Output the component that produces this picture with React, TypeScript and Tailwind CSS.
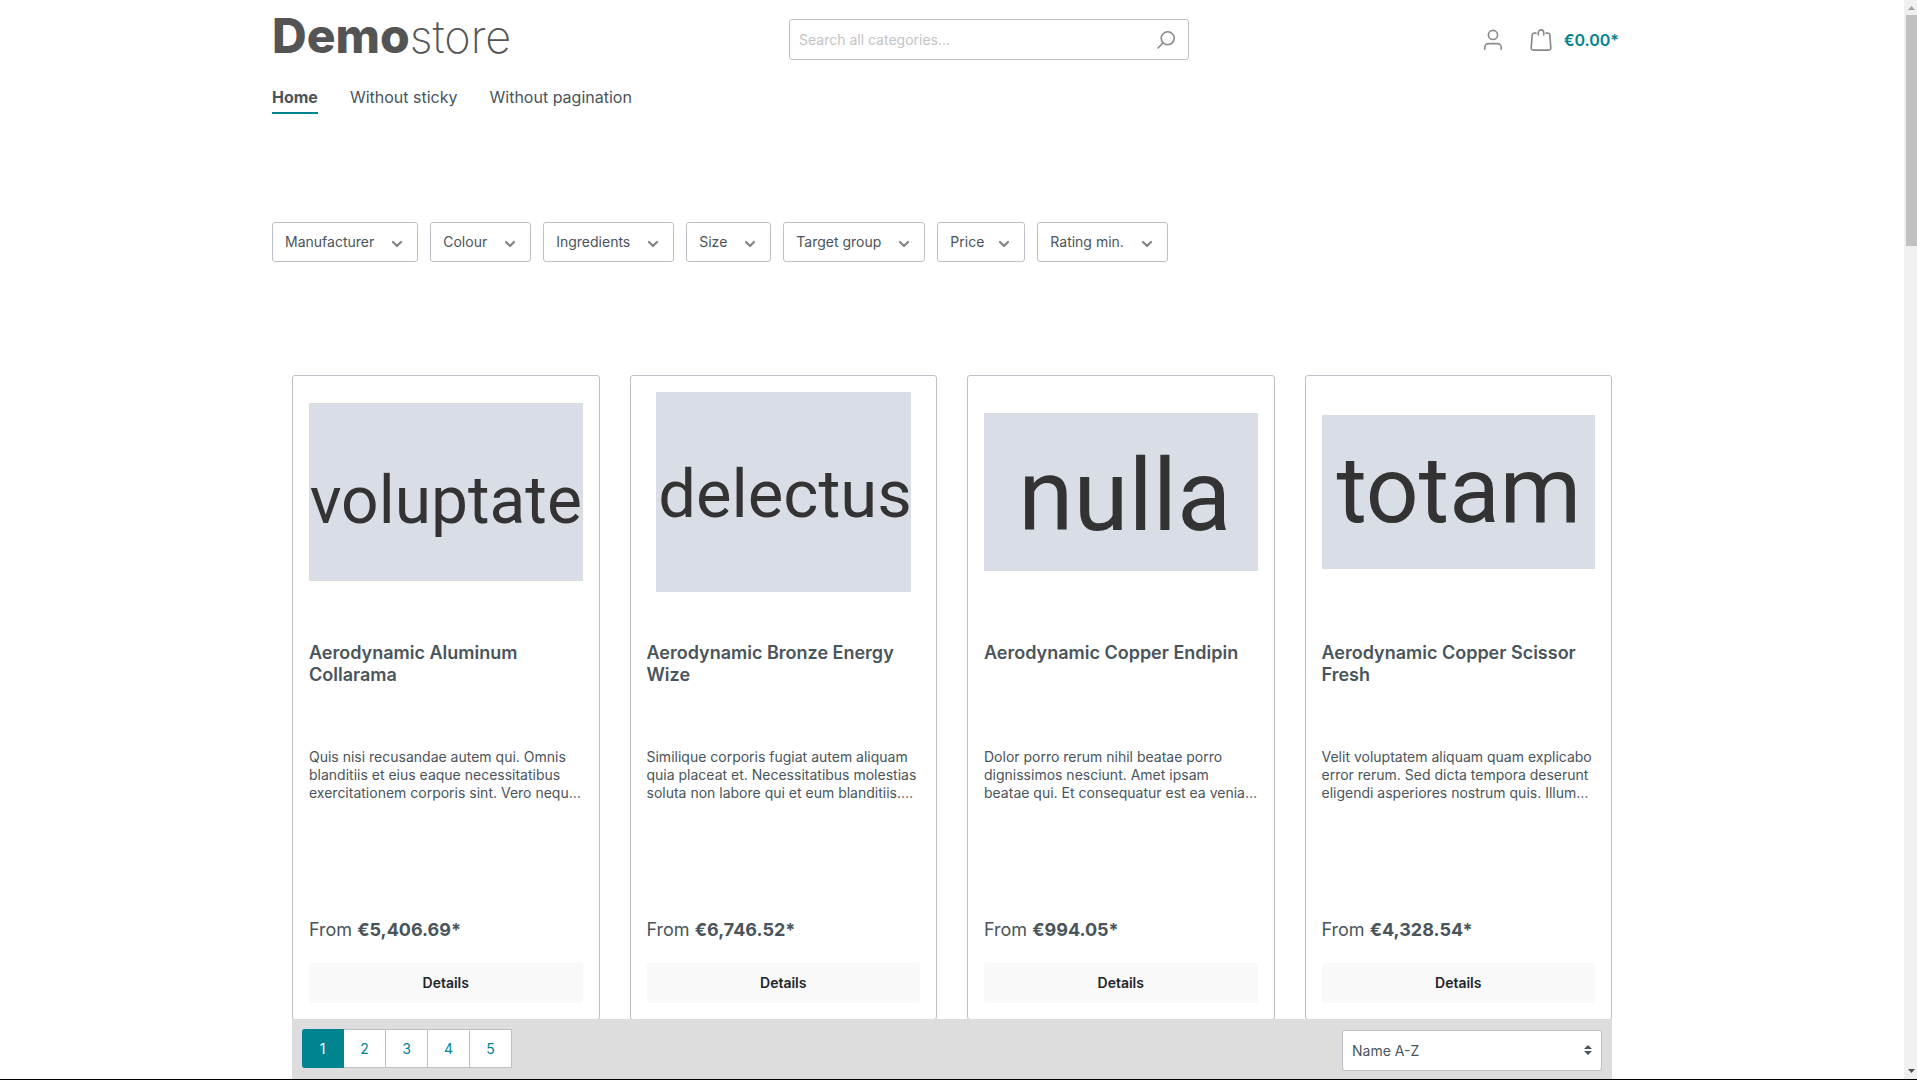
import { clsx } from 'clsx';

type Product = {
  name: string;
  description: string;
  price: string;
  cover: {
    label: string;
    width: number;
    height: number;
    fontSize: number;
    x: number;
    y: number;
  };
};

const navItems = ['Home', 'Without sticky', 'Without pagination'];

const filters = [
  'Manufacturer',
  'Colour',
  'Ingredients',
  'Size',
  'Target group',
  'Price',
  'Rating min.',
];

const pages = [1, 2, 3, 4, 5];

const products: Product[] = [
  {
    name: 'Aerodynamic Aluminum Collarama',
    description:
      'Quis nisi recusandae autem qui. Omnis blanditiis et eius eaque necessitatibus exercitationem corporis sint. Vero nequ…',
    price: '€5,406.69*',
    cover: { label: 'voluptate', width: 274, height: 178, fontSize: 66, x: 137, y: 120 },
  },
  {
    name: 'Aerodynamic Bronze Energy Wize',
    description:
      'Similique corporis fugiat autem aliquam quia placeat et. Necessitatibus molestias soluta non labore qui et eum blanditiis.…',
    price: '€6,746.52*',
    cover: { label: 'delectus', width: 255, height: 200, fontSize: 67, x: 129, y: 125 },
  },
  {
    name: 'Aerodynamic Copper Endipin',
    description:
      'Dolor porro rerum nihil beatae porro dignissimos nesciunt. Amet ipsam beatae qui. Et consequatur est ea venia…',
    price: '€994.05*',
    cover: { label: 'nulla', width: 274, height: 158, fontSize: 100, x: 141, y: 117 },
  },
  {
    name: 'Aerodynamic Copper Scissor Fresh',
    description:
      'Velit voluptatem aliquam quam explicabo error rerum. Sed dicta tempora deserunt eligendi asperiores nostrum quis. Illum…',
    price: '€4,328.54*',
    cover: { label: 'totam', width: 274, height: 154, fontSize: 93, x: 137, y: 107 },
  },
];

const SearchIcon = () => (
  <svg
    width="18"
    height="18"
    viewBox="0 0 18 18"
    fill="none"
    stroke="#8a8a8a"
    strokeWidth="1.6"
    strokeLinecap="round"
  >
    <circle cx="10.7" cy="7.3" r="6.5" />
    <path d="M6 12L1 17" />
  </svg>
);

const AvatarIcon = () => (
  <svg
    width="22"
    height="22"
    viewBox="0 0 24 24"
    fill="none"
    stroke="#8a8a8a"
    strokeWidth="1.8"
    strokeLinecap="round"
  >
    <circle cx="12" cy="6.5" r="5" />
    <path d="M3 22v-2a4 4 0 0 1 4-4h10a4 4 0 0 1 4 4v2" />
  </svg>
);

const BagIcon = () => (
  <svg
    width="22"
    height="22"
    viewBox="0 0 24 24"
    fill="none"
    stroke="#8a8a8a"
    strokeWidth="1.8"
    strokeLinecap="round"
  >
    <path d="M6.500 4.500H4.400a2 2 0 0 0-2 1.900L1.300 20.900A2 2 0 0 0 3.300 23h17.400a2 2 0 0 0 2-2.100L21.600 6.400A2 2 0 0 0 19.600 4.500H17.500" />
    <path d="M9 6.500V4a3 3 0 0 1 6 0v2.500" />
  </svg>
);

const ChevronIcon = () => (
  <svg
    width="16"
    height="16"
    viewBox="0 0 16 16"
    fill="none"
    stroke="#858585"
    strokeWidth="2.2"
    strokeLinecap="round"
    strokeLinejoin="round"
  >
    <path d="M4 8l4 4 4-4" />
  </svg>
);

const Header = () => (
  <header className="pt-[19px]">
    <div className="flex h-[41px] items-center">
      <a href="#" className="flex-1 self-start text-[48px] leading-[34px] text-[#545454]">
        <span className="font-extrabold">Demo</span>
        <span className="text-[45px] font-extralight">store</span>
      </a>
      <form className="flex h-[41px] w-[400px] items-center rounded-[3px] border border-[#bcc1c7] pr-[13px]">
        <input
          type="search"
          aria-label="Search"
          placeholder="Search all categories..."
          className="h-full min-w-0 flex-1 px-[9px] text-sm outline-none placeholder:text-[#c3c3c3]"
        />
        <button type="button" aria-label="Search">
          <SearchIcon />
        </button>
      </form>
      <div className="flex w-[443px] items-center justify-end gap-[26px] pr-[13px]">
        <button type="button" aria-label="Your account">
          <AvatarIcon />
        </button>
        <a href="#" className="flex items-center gap-3 font-semibold text-[#008490]">
          <BagIcon />
          <span>€0.00*</span>
        </a>
      </div>
    </div>
    <nav className="mt-[25px] flex gap-8">
      {navItems.map((item, i) => (
        <a
          key={item}
          href="#"
          className={clsx(
            'border-b-2 pb-[3px] leading-6',
            i === 0 ? 'border-[#008490] font-bold' : 'border-transparent',
          )}
        >
          {item}
        </a>
      ))}
    </nav>
  </header>
);

const ProductCard = ({ product }: { product: Product }) => {
  const { cover } = product;
  return (
    <article className="rounded-[3px] border border-[#bcc1c7] p-4">
      <div className="flex h-[200px] items-center justify-center">
        <svg
          viewBox={`0 0 ${cover.width} ${cover.height}`}
          width={cover.width}
          height={cover.height}
          className="max-w-full bg-[#d8dde6]"
        >
          <text
            x={cover.x}
            y={cover.y}
            fontSize={cover.fontSize}
            textAnchor="middle"
            fill="#333333"
            className="font-['Roboto',sans-serif]"
          >
            {cover.label}
          </text>
        </svg>
      </div>
      <a href="#" className="mt-[50px] block h-[106px] text-lg leading-[22px] font-semibold">
        {product.name}
      </a>
      <p className="h-[170px] text-sm leading-[18px]">{product.description}</p>
      <p className="text-lg leading-6">
        From <span className="font-bold">{product.price}</span>
      </p>
      <button
        type="button"
        className="mt-[21px] h-10 w-full rounded-[3px] bg-[#f9f9f9] text-sm font-semibold text-[#212529]"
      >
        Details
      </button>
    </article>
  );
};

const ListingBar = () => (
  <div className="flex shrink-0 items-start justify-between bg-[#dddddd] p-[10px] pb-2">
    <nav aria-label="Pagination" className="flex h-[39px]">
      {pages.map((page) => (
        <button
          key={page}
          type="button"
          className={clsx(
            'w-[42px] border-y border-r text-sm',
            page === 1
              ? 'rounded-l-[3px] border-[#008490] bg-[#008490] text-white'
              : 'border-[#bcc1c7] bg-white text-[#008490]',
          )}
        >
          {page}
        </button>
      ))}
    </nav>
    <div className="relative mt-px">
      <select
        aria-label="Sorting"
        className="h-[41px] w-[260px] appearance-none rounded-[3px] border border-[#bcc1c7] bg-white px-[9px] text-sm"
      >
        <option>Name A-Z</option>
      </select>
      <svg
        width="8"
        height="10"
        viewBox="0 0 4 5"
        fill="#4a545b"
        className="pointer-events-none absolute top-[15px] right-[10px]"
      >
        <path d="M2 0L0 2h4zm0 5L0 3h4z" />
      </svg>
    </div>
  </div>
);

const Scrollbar = () => (
  <div className="flex w-[13px] shrink-0 flex-col items-end bg-[#f0f0f0]">
    <svg width="11" height="15" viewBox="0 0 11 15" fill="#a3a3a3">
      <path d="M2 10h7L5.500 6z" />
    </svg>
    <div className="h-[231px] w-[11px] bg-[#c1c1c1]" />
    <svg width="11" height="15" viewBox="0 0 11 15" fill="#505050" className="mt-auto">
      <path d="M2 5h7L5.500 9z" />
    </svg>
  </div>
);

const App = () => {
  return (
    <div className="flex h-screen border-b border-black bg-white font-['Inter',sans-serif] text-base text-[#4a545b]">
      <div className="min-w-0 flex-1">
        <div className="mx-auto flex h-full max-w-[1400px] flex-col px-5">
          <Header />
          <div className="mt-[108px] flex flex-wrap gap-3">
            {filters.map((filter) => (
              <button
                key={filter}
                type="button"
                className={clsx(
                  'flex h-10 items-center rounded-[3px] border border-[#bcc1c7] px-3 text-sm',
                  filter === 'Price' ? 'gap-3' : 'gap-[15px]',
                )}
              >
                {filter}
                <ChevronIcon />
              </button>
            ))}
          </div>
          <main className="mt-[113px] flex min-h-0 flex-1 flex-col px-5">
            <div className="grid min-h-0 flex-1 grid-cols-4 items-start gap-[30px] overflow-hidden">
              {products.map((product) => (
                <ProductCard key={product.name} product={product} />
              ))}
            </div>
            <ListingBar />
          </main>
        </div>
      </div>
      <Scrollbar />
    </div>
  );
};

export default App;
